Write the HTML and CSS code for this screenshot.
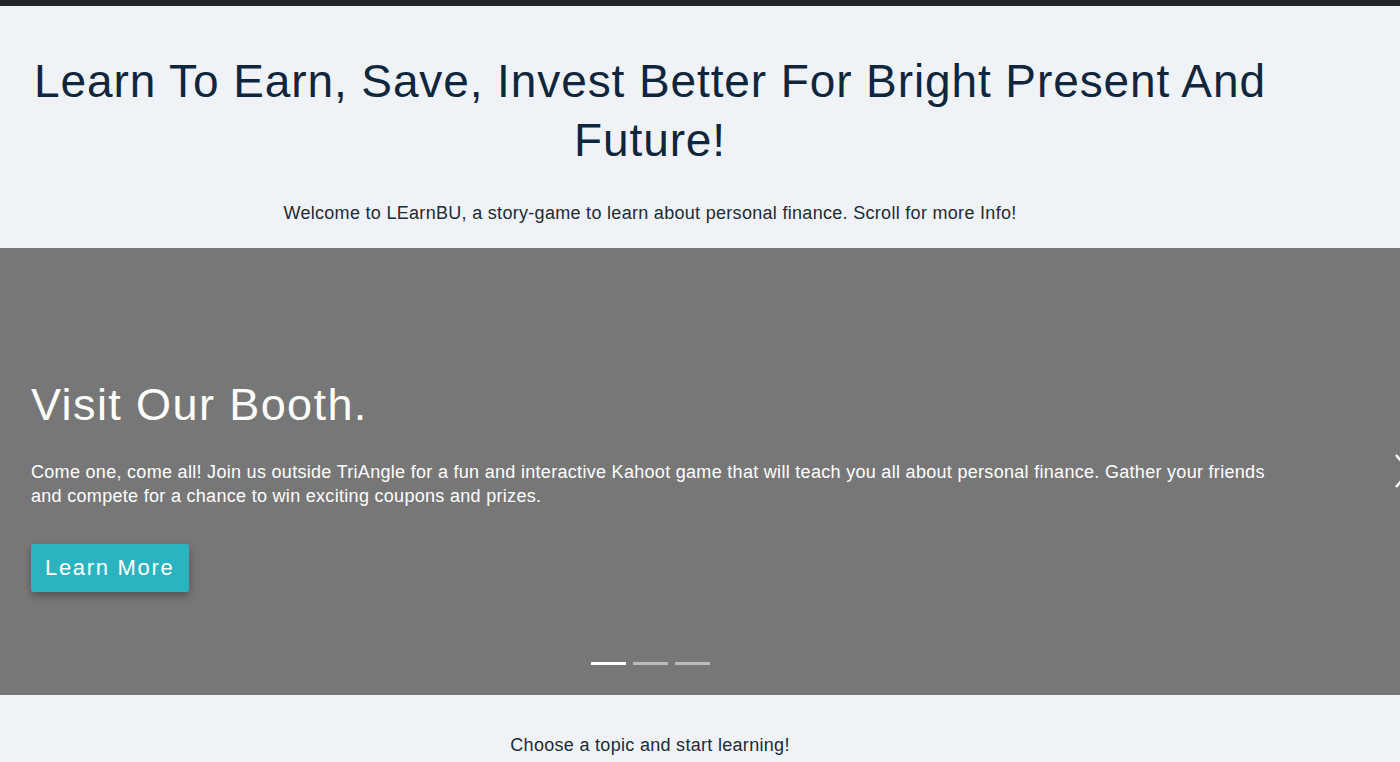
FILE: index.html
```html
<!DOCTYPE html>
<html lang="en">
<head>
<meta charset="utf-8">
<title>LEarnBU</title>
<link rel="stylesheet" href="styles.css">
</head>
<body>
<div class="topbar"></div>
<header class="intro">
  <h1 class="intro-title">Learn To Earn, Save, Invest Better For Bright Present And Future!</h1>
  <p class="intro-sub">Welcome to LEarnBU, a story-game to learn about personal finance. Scroll for more Info!</p>
</header>
<section class="carousel">
  <div class="slide">
    <h2 class="slide-title">Visit Our Booth.</h2>
    <p class="slide-text">Come one, come all! Join us outside TriAngle for a fun and interactive Kahoot game that will teach you all about personal finance. Gather your friends and compete for a chance to win exciting coupons and prizes.</p>
    <a class="btn" href="#">Learn More</a>
  </div>
  <div class="indicators">
    <span class="ind active"></span>
    <span class="ind"></span>
    <span class="ind"></span>
  </div>
  <svg class="next" width="20" height="40" viewBox="0 0 20 40"><path d="M2 4 L16 20 L2 36" fill="none" stroke="#fff" stroke-width="2.5"/></svg>
</section>
<section class="topics">
  <p class="topics-text">Choose a topic and start learning!</p>
</section>
</body>
</html>
```

FILE: styles.css
```css
* { box-sizing: border-box; }
html, body { margin: 0; padding: 0; }
body {
  background: #eff3f7;
  font-family: "Liberation Sans", Arial, sans-serif;
  overflow: hidden;
}
.topbar { height: 6px; background: #222427; }
.intro {
  width: 1300px;
  text-align: center;
  padding: 46px 0 0;
  height: 242px;
}
.intro-title {
  margin: 0;
  font-weight: 400;
  font-size: 46px;
  line-height: 59px;
  letter-spacing: 0.9px;
  color: #10263d;
}
.intro-sub {
  margin: 31px 0 0;
  font-size: 18px;
  line-height: 24px;
  letter-spacing: 0.3px;
  color: #222a33;
}
.carousel {
  position: relative;
  height: 447px;
  background: #777777;
  color: #fff;
}
.slide {
  padding: 129px 0 0 31px;
  width: 1280px;
}
.slide-title {
  margin: 0;
  font-weight: 400;
  font-size: 45px;
  line-height: 56px;
  letter-spacing: 1.4px;
}
.slide-text {
  margin: 27px 0 0;
  font-size: 18px;
  line-height: 24px;
  letter-spacing: 0.3px;
}
.btn {
  display: inline-block;
  margin-top: 36px;
  padding: 0 14px;
  height: 48px;
  line-height: 48px;
  width: 158px;
  background: #2bb4bf;
  color: #fff;
  text-decoration: none;
  font-size: 22px;
  letter-spacing: 1.7px;
  border-radius: 2px;
  box-shadow: 0 4px 8px rgba(0,0,0,0.3);
}
.indicators {
  position: absolute;
  left: 591px;
  top: 414px;
  display: flex;
  gap: 7px;
}
.ind {
  width: 35px;
  height: 3px;
  background: rgba(255,255,255,0.5);
}
.ind.active { background: #fff; }
.next {
  position: absolute;
  left: 1394px;
  top: 203px;
}
.topics {
  width: 1300px;
  text-align: center;
  padding-top: 38px;
}
.topics-text {
  margin: 0;
  font-size: 18px;
  line-height: 24px;
  letter-spacing: 0.3px;
  color: #222a33;
}
```
